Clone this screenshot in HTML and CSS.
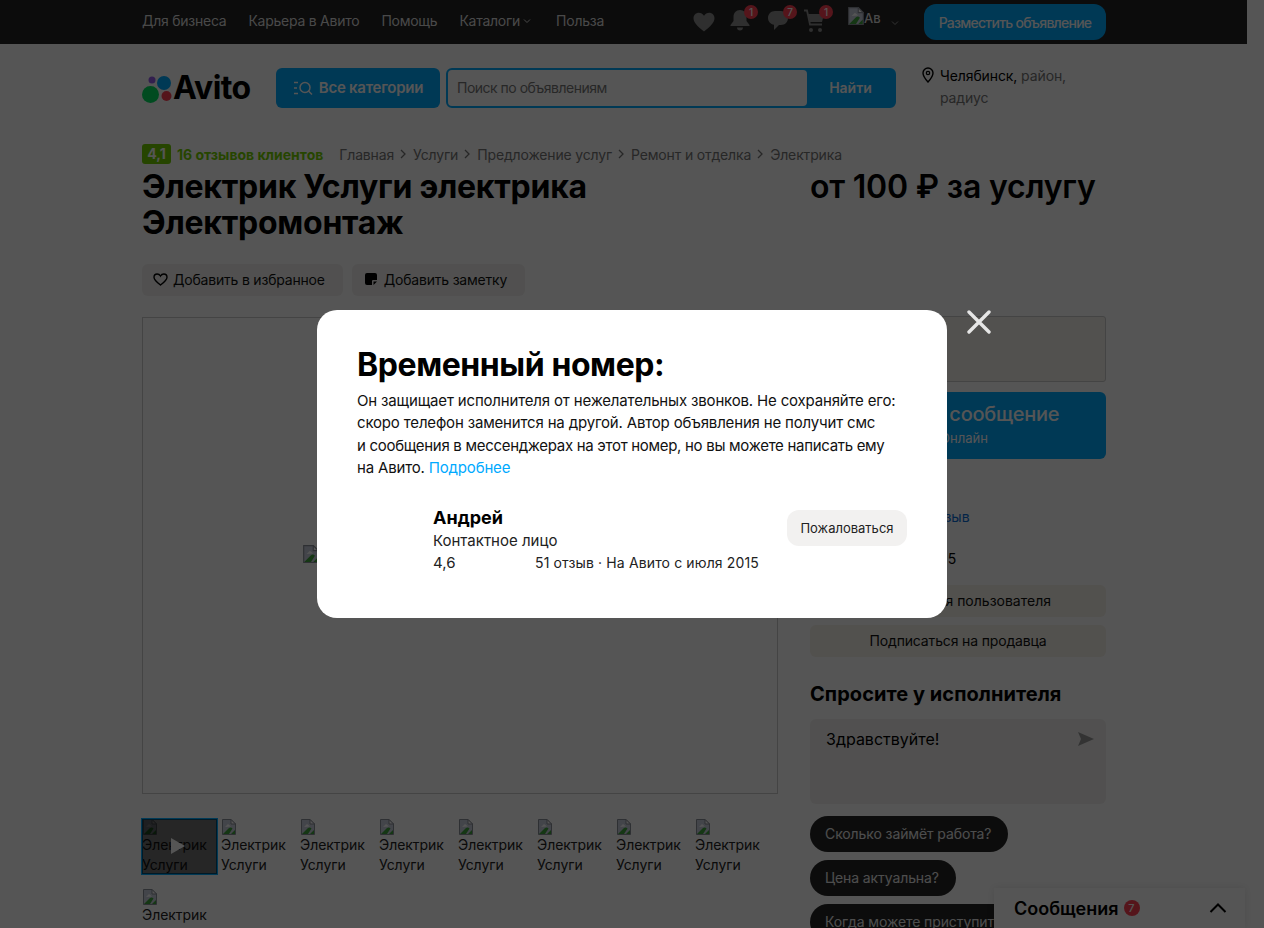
FILE: index.html
```html
<!DOCTYPE html>
<html lang="ru">
<head>
<meta charset="utf-8">
<title>Электрик Услуги электрика Электромонтаж</title>
<link rel="stylesheet" href="styles.css">
</head>
<body>
<svg class="defs" width="0" height="0" aria-hidden="true">
  <symbol id="broken" viewBox="0 0 14 16">
    <path d="M.5.5H9L13.500 5v10.500H.5z" fill="#c8cede" stroke="#8b8f98"/>
    <path d="M9 .5V5h4.500z" fill="#fff" stroke="#8b8f98"/>
    <path d="M1 15l6-6c1.500-1 2.500-.5 3.500.5L7 15z" fill="#3fa53c"/>
    <path d="M9 15l4-4v4z" fill="#3fa53c"/>
    <path d="M3 8l3-3 3 2.500z" fill="#fff"/>
  </symbol>
</svg>
<header class="topbar">
  <nav class="topnav">
    <a>Для бизнеса</a>
    <a>Карьера в Авито</a>
    <a>Помощь</a>
    <a class="with-caret">Каталоги <svg class="caret" viewBox="0 0 8 6" width="8" height="6"><path d="M1 1.5l3 3 3-3" fill="none" stroke="currentColor"/></svg></a>
    <a>Польза</a>
  </nav>
  <div class="topicons">
    <svg class="ti ti-heart" viewBox="0 0 22 20" width="22" height="20"><path d="M11 19.5C4 14 .5 10.500.5 6.300.5 3 3 .8 5.800.8c2.100 0 4 1 5.200 3 1.200-2 3.100-3 5.200-3 2.800 0 5.300 2.200 5.300 5.500 0 4.200-3.500 7.700-10.500 13.200z" fill="#8c8c8c"/></svg>
    <span class="ti-wrap ti-bell"><svg viewBox="0 0 20 22" width="20" height="22"><path d="M10 1c4 0 6.500 3 6.500 7v4l3 4v1H.5v-1l3-4V8c0-4 2.500-7 6.500-7zM7 18.500h6c0 1.800-1.200 3-3 3s-3-1.200-3-3z" fill="#8c8c8c"/></svg><b class="badge">1</b></span>
    <span class="ti-wrap ti-chat"><svg viewBox="0 0 22 22" width="22" height="22"><path d="M8 2h6c4 0 7 2.800 7 7s-3 7-7 7h-2l-5 5v-5.200C3.500 15 1 12.500 1 9c0-4.200 3-7 7-7z" fill="#8c8c8c"/></svg><b class="badge">7</b></span>
    <span class="ti-wrap ti-cart"><svg viewBox="0 0 22 24" width="22" height="24"><path d="M1 1.500h3l3 14h12" fill="none" stroke="#8c8c8c" stroke-width="1.800"/><path d="M5 5h16l-2 8H7z" fill="#8c8c8c"/><circle cx="8" cy="21" r="2" fill="#8c8c8c"/><circle cx="17" cy="21" r="2" fill="#8c8c8c"/></svg><b class="badge">1</b></span>
    <span class="avatar"><svg class="bi" width="16" height="18"><use href="#broken"/></svg><span class="avatar-alt">Ав</span></span>
    <svg class="caret caret-user" viewBox="0 0 8 6" width="8" height="6"><path d="M1 1.500l3 3 3-3" fill="none" stroke="#999"/></svg>
  </div>
  <a class="post-btn">Разместить объявление</a>
</header>

<div class="page">
  <div class="head">
    <div class="logo">
      <svg viewBox="0 0 30 30" width="30" height="30"><circle cx="10" cy="6" r="3.500" fill="#965eeb"/><circle cx="22" cy="9" r="7" fill="#0af"/><circle cx="8.500" cy="20.500" r="8.500" fill="#04e061"/><circle cx="24.500" cy="22" r="5" fill="#ff4053"/></svg>
      <span class="logo-text">Avito</span>
    </div>
    <a class="cat-btn"><svg viewBox="0 0 20 16" width="20" height="16"><path d="M1 2.500h4M1 8h3M1 13.500h4" stroke="#fff" stroke-width="1.400" fill="none"/><circle cx="12" cy="7.500" r="5" fill="none" stroke="#fff" stroke-width="1.500"/><path d="M15.500 11l3.500 3.500" stroke="#fff" stroke-width="1.500"/></svg>Все категории</a>
    <div class="search">
      <span class="search-input">Поиск по объявлениям</span>
      <span class="search-btn">Найти</span>
    </div>
    <div class="loc">
      <svg viewBox="0 0 12 16" width="12" height="16"><path d="M6 1a5 5 0 0 1 5 5c0 3.500-5 9-5 9S1 9.500 1 6a5 5 0 0 1 5-5z" fill="none" stroke="#000" stroke-width="1.400"/><circle cx="6" cy="6" r="1.700" fill="none" stroke="#000" stroke-width="1.200"/></svg>
      <p><span class="city">Челябинск,</span> район, радиус</p>
    </div>
  </div>

  <div class="crumbs">
    <span class="rate">4,1</span>
    <span class="rate-text">16 отзывов клиентов</span>
    <span class="path">
      <a>Главная</a><i><svg viewBox="0 0 6 10" width="6" height="10"><path d="M1 1l4 4-4 4" fill="none" stroke="#757575" stroke-width="1.300"/></svg></i><a>Услуги</a><i><svg viewBox="0 0 6 10" width="6" height="10"><path d="M1 1l4 4-4 4" fill="none" stroke="#757575" stroke-width="1.300"/></svg></i><a>Предложение услуг</a><i><svg viewBox="0 0 6 10" width="6" height="10"><path d="M1 1l4 4-4 4" fill="none" stroke="#757575" stroke-width="1.300"/></svg></i><a>Ремонт и отделка</a><i><svg viewBox="0 0 6 10" width="6" height="10"><path d="M1 1l4 4-4 4" fill="none" stroke="#757575" stroke-width="1.300"/></svg></i><a>Электрика</a>
    </span>
  </div>

  <div class="title-row">
    <h1>Электрик Услуги электрика Электромонтаж</h1>
    <div class="price">от 100 ₽ за услугу</div>
  </div>

  <div class="actions">
    <a class="act"><svg viewBox="0 0 16 14" width="15" height="13"><path d="M8 13C3.500 9.500 1 7 1 4.500 1 2.500 2.500 1 4.400 1 5.800 1 7.200 1.800 8 3.200 8.800 1.800 10.200 1 11.600 1 13.500 1 15 2.500 15 4.500 15 7 12.500 9.500 8 13z" fill="none" stroke="#000" stroke-width="1.500"/></svg>Добавить в избранное</a>
    <a class="act act-note"><svg viewBox="0 0 12 12" width="12" height="12"><path d="M2 0h8a2 2 0 0 1 2 2v5H8a1 1 0 0 0-1 1v4H2a2 2 0 0 1-2-2V2a2 2 0 0 1 2-2zM8.500 8.500H12L8.500 12z" fill="#000"/></svg>Добавить заметку</a>
  </div>

  <div class="columns">
    <main class="left">
      <div class="gallery"><span class="gal-broken"><svg width="16" height="18"><use href="#broken"/></svg></span></div>
      <div class="thumbs">
        <div class="thumb active"><svg width="16" height="16"><use href="#broken"/></svg>Электрик Услуги<span class="play"></span></div>
        <div class="thumb"><svg width="16" height="16"><use href="#broken"/></svg>Электрик Услуги</div>
        <div class="thumb"><svg width="16" height="16"><use href="#broken"/></svg>Электрик Услуги</div>
        <div class="thumb"><svg width="16" height="16"><use href="#broken"/></svg>Электрик Услуги</div>
        <div class="thumb"><svg width="16" height="16"><use href="#broken"/></svg>Электрик Услуги</div>
        <div class="thumb"><svg width="16" height="16"><use href="#broken"/></svg>Электрик Услуги</div>
        <div class="thumb"><svg width="16" height="16"><use href="#broken"/></svg>Электрик Услуги</div>
        <div class="thumb"><svg width="16" height="16"><use href="#broken"/></svg>Электрик Услуги</div>
        <div class="thumb"><svg width="16" height="16"><use href="#broken"/></svg>Электрик Услуги</div>
      </div>
    </main>
    <aside class="right">
      <div class="phone-box"></div>
      <a class="msg-btn"><span class="msg-main">Написать сообщение</span><span class="msg-sub">Онлайн</span></a>
      <div class="seller">
        <a class="rev-link">Оставить отзыв</a>
        <p class="since">На Авито с 2015</p>
      </div>
      <a class="wide-btn wide-first">Объявления пользователя</a>
      <a class="wide-btn">Подписаться на продавца</a>
      <h2>Спросите у исполнителя</h2>
      <div class="ask">
        <span>Здравствуйте!</span>
        <svg viewBox="0 0 16 14" width="16" height="14"><path d="M0 0l16 7-16 7 3-7z" fill="#9a9a9a"/></svg>
      </div>
      <div class="chips">
        <a class="chip">Сколько займёт работа?</a>
        <a class="chip">Цена актуальна?</a>
        <a class="chip">Когда можете приступить?</a>
      </div>
    </aside>
  </div>
</div>

<div class="dock">
  <span class="dock-title">Сообщения</span><b class="dock-badge">7</b>
  <svg viewBox="0 0 18 10" width="18" height="10"><path d="M1.500 9L9 1.500 16.500 9" fill="none" stroke="#000" stroke-width="2"/></svg>
</div>

<div class="overlay">
  <section class="modal">
    <button class="close" aria-label="Закрыть"><svg viewBox="0 0 24 24" width="24" height="24"><path d="M2 2l20 20M22 2L2 22" stroke="#e6e6e6" stroke-width="3.400" stroke-linecap="round"/></svg></button>
    <h3>Временный номер:</h3>
    <p class="modal-text">Он защищает исполнителя от нежелательных звонков. Не сохраняйте его:<br>скоро телефон заменится на другой. Автор объявления не получит смс<br><span class="tight">и сообщения в мессенджерах на этот номер, но вы можете написать ему</span><br>на Авито. <a>Подробнее</a></p>
    <div class="person">
      <div class="person-info">
        <div class="person-name">Андрей</div>
        <div class="person-role">Контактное лицо</div>
        <div class="person-stats"><span class="score">4,6</span><span class="stats-text">51 отзыв · На Авито с июля 2015</span></div>
      </div>
      <a class="report">Пожаловаться</a>
    </div>
  </section>
</div>
</body>
</html>
```
FILE: styles.css
```css
* { box-sizing: border-box; }
html, body { margin: 0; height: 928px; overflow: hidden; }
body { background: #fff; color: #000; font-family: Inter, "Noto Sans", "Liberation Sans", sans-serif; font-size: 14px; position: relative; }
.defs { position: absolute; }
a { color: inherit; text-decoration: none; }
p { margin: 0; }

.topbar { width: 1247px; height: 44px; background: #242424; padding: 0 141px 0 142px; display: flex; align-items: center; color: #fff; }
.topnav { display: flex; gap: 22px; font-size: 14px; letter-spacing: -.25px; color: #dcdcdc; padding-bottom: 3px; }
.with-caret { display: flex; align-items: center; gap: 3px; margin-right: 3px; }
.caret { display: block; }
.topicons { margin-left: auto; display: flex; align-items: center; gap: 16px; padding-bottom: 2px; }
.ti-wrap { position: relative; display: block; height: 24px; }
.ti-heart { margin-top: 1px; }
.ti-bell { margin-left: -1px; }
.ti-chat { margin-left: 1px; }
.ti-cart { margin-left: -2px; }
.badge { position: absolute; top: -4px; right: -8px; width: 14px; height: 14px; border-radius: 50%; background: #ff4053; color: #fff; font-size: 10px; line-height: 14px; text-align: center; font-weight: 500; }
.avatar { display: flex; width: 33px; height: 20px; overflow: hidden; margin: -8px 0 0 7px; color: #ddd; }
.avatar .bi { flex: none; }
.avatar-alt { font-size: 13px; line-height: 22px; font-weight: 500; }
.caret-user { margin: 4px 0 0 -6px; }
.post-btn { margin-left: 25px; width: 182px; height: 36px; border-radius: 12px; background: #0af; color: #fff; font-size: 14px; font-weight: 500; letter-spacing: -.75px; display: flex; align-items: center; justify-content: center; }

.page { width: 964px; margin-left: 142px; }
.head { display: flex; margin-top: 24px; height: 40px; }
.logo { width: 134px; display: flex; align-items: center; gap: 1px; }
.logo svg { flex: none; margin-top: 2px; }
.logo-text { font-size: 32px; font-weight: 700; letter-spacing: -.6px; line-height: 40px; }
.cat-btn { width: 164px; background: #0af; color: #fff; border-radius: 6px; font-size: 15px; font-weight: 600; letter-spacing: -.25px; display: flex; align-items: center; justify-content: center; gap: 6px; padding-bottom: 1px; }
.search { margin-left: 6px; width: 450px; display: flex; border: 2px solid #0af; border-radius: 6px; background: #0af; }
.search-input { width: 359px; background: #fff; border-radius: 4px; padding-left: 9px; color: #777; line-height: 36px; font-size: 14px; letter-spacing: -.5px; }
.search-btn { flex: 1; color: #fff; font-weight: 600; text-align: center; line-height: 36px; }
.loc { margin-left: 26px; width: 150px; display: flex; gap: 6px; color: #757575; line-height: 22px; margin-top: -3px; letter-spacing: -.1px; }
.loc svg { flex: none; margin-top: 2px; }
.city { color: #000; }

.crumbs { display: flex; align-items: center; height: 20px; margin-top: 36px; }
.rate { width: 29px; height: 20px; background: #72d000; border-radius: 3px; color: #fff; font-weight: 700; font-size: 14px; line-height: 20px; text-align: center; }
.rate-text { margin-left: 6px; color: #72d000; font-weight: 700; font-size: 14px; }
.path { margin-left: 16px; color: #757575; font-size: 14px; display: flex; align-items: center; letter-spacing: -.15px; }
.path i { margin: 0 7px 0 6px; display: flex; }

.title-row { display: flex; justify-content: space-between; margin-top: 5px; }
h1 { margin: 0; width: 500px; font-size: 32px; line-height: 36px; font-weight: 700; letter-spacing: -.25px; }
.price { width: 296px; font-size: 32px; font-weight: 600; line-height: 36px; letter-spacing: -.2px; }

.actions { display: flex; gap: 9px; margin-top: 23px; }
.act { height: 32px; padding: 0 18px 2px 11px; background: #f2f1f0; border-radius: 6px; display: flex; align-items: center; gap: 5px; color: #111; letter-spacing: -.2px; }
.act-note { gap: 7px; }
.act-note svg { margin-left: 2px; }

.columns { display: flex; justify-content: space-between; margin-top: 21px; }
.left { width: 636px; }
.gallery { height: 477px; border: 1px solid #ccc; position: relative; }
.gal-broken { position: absolute; left: 160px; top: 227px; }
.thumbs { display: flex; flex-wrap: wrap; gap: 15px 4px; margin-top: 25px; }
.thumb { width: 75px; height: 55px; line-height: 20px; font-size: 14px; letter-spacing: -.05px; overflow: hidden; position: relative; color: #222; }
.thumb:last-child { height: 60px; }
.thumb svg { display: block; }
.thumb.active { outline: 2px solid #0af; outline-offset: -1px; }
.thumb.active::before { content: ""; position: absolute; inset: 0; background: rgba(0,0,0,.55); }
.play { position: absolute; left: 29px; top: 19px; border-left: 14px solid #fff; border-top: 8px solid transparent; border-bottom: 8px solid transparent; }

.right { width: 296px; }
.phone-box { height: 66px; margin-top: -1px; border: 1px solid #ccc; border-radius: 3px; background: #f7f3ec; }
.msg-btn { margin-top: 10px; height: 67px; background: #0af; color: #fff; border-radius: 6px; display: flex; flex-direction: column; align-items: center; padding-top: 9px; }
.msg-main { font-size: 20px; font-weight: 500; line-height: 26px; letter-spacing: -.25px; padding-right: 5px; }
.msg-sub { font-size: 13px; line-height: 22px; padding-left: 12px; }
.seller { height: 126px; padding: 49px 0 0 36px; }
.rev-link { display: block; padding-left: 16px; color: #0a6cd6; }
.since { margin-top: 25px; }
.wide-btn { display: flex; align-items: center; justify-content: center; height: 32px; padding-bottom: 2px; background: #f6f2e9; border-radius: 6px; margin-bottom: 8px; color: #111; letter-spacing: -.15px; }
.wide-first { padding-left: 4px; letter-spacing: 0; }
h2 { margin: 24px 0 0; font-size: 20px; line-height: 26px; font-weight: 700; letter-spacing: .05px; }
.ask { margin-top: 12px; height: 85px; background: #f2f1f0; border-radius: 6px; padding: 10px 12px 0 16px; display: flex; justify-content: space-between; font-size: 16px; }
.ask svg { margin-top: 3px; }
.chips { display: flex; flex-direction: column; align-items: flex-start; gap: 8px; margin-top: 12px; }
.chip { height: 36px; padding: 0 17px 1px 15px; background: #242424; color: #e8e8e8; border-radius: 18px; display: flex; align-items: center; font-size: 14px; letter-spacing: -.1px; white-space: nowrap; }

.dock { position: absolute; left: 994px; top: 888px; width: 251px; height: 40px; background: #fff; box-shadow: 0 0 8px rgba(0,0,0,.1); display: flex; align-items: center; padding: 0 18px 0 20px; }
.dock-title { font-size: 18px; font-weight: 600; }
.dock-badge { margin-left: 5px; width: 16px; height: 16px; border-radius: 50%; background: #ff4053; color: #fff; font-size: 11px; line-height: 16px; text-align: center; font-weight: 500; }
.dock svg { margin-left: auto; }

.overlay { position: fixed; inset: 0; background: rgba(0,0,0,.667); display: flex; align-items: center; justify-content: center; }
.modal { position: relative; width: 630px; height: 308px; background: #fff; border-radius: 20px; padding: 35px 40px 0; }
.close { position: absolute; left: 650px; top: 0; padding: 0; border: 0; background: none; width: 24px; height: 24px; }
.close svg { display: block; }
h3 { margin: 0; font-size: 32px; line-height: 40px; font-weight: 700; letter-spacing: -.42px; }
.modal-text { margin-top: 5px; font-size: 15px; line-height: 22.400px; color: #111; letter-spacing: -.17px; white-space: nowrap; }
.modal-text a { color: #0af; }
.tight { letter-spacing: -.3px; }
.person { display: flex; justify-content: space-between; margin-top: 25px; padding-left: 76px; }
.person-name { font-size: 18px; font-weight: 700; line-height: 25px; }
.person-role { font-size: 15px; line-height: 22px; color: #222; }
.person-stats { display: flex; font-size: 15px; line-height: 22px; color: #222; }
.stats-text { font-size: 14px; letter-spacing: .13px; }
.score { width: 102px; }
.report { width: 120px; height: 36px; background: #f2f1f0; border-radius: 12px; display: flex; align-items: center; justify-content: center; font-size: 13px; margin-top: 5px; color: #222; }
```
